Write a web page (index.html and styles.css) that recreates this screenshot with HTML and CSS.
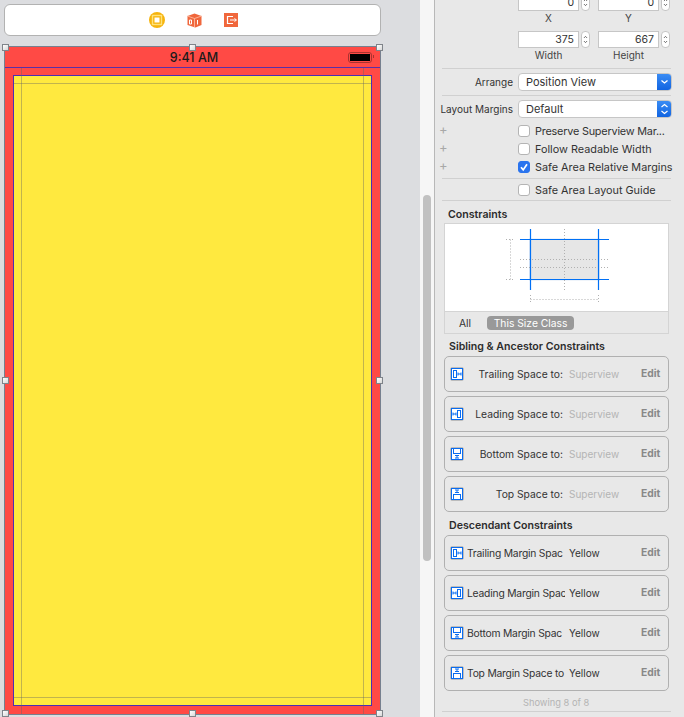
FILE: index.html
```html
<!DOCTYPE html>
<html lang="en">
<head>
    <meta charset="UTF-8">
    <title>Interface Builder</title>
    <link rel="stylesheet" href="styles.css">
</head>
<body>
    <svg class="defs" width="0" height="0">
        <symbol id="ic-trailing" viewBox="0 0 14 14">
            <rect x="1.5" y="1.5" width="11" height="11" fill="none" stroke="currentColor"/>
            <rect x="3.5" y="3.5" width="3" height="7" fill="none" stroke="currentColor"/>
            <path d="M8 5.5v3M11 5.5v3M8 7h3" fill="none" stroke="currentColor"/>
        </symbol>
        <symbol id="ic-leading" viewBox="0 0 14 14">
            <rect x="1.5" y="1.5" width="11" height="11" fill="none" stroke="currentColor"/>
            <rect x="7.5" y="3.5" width="3" height="7" fill="none" stroke="currentColor"/>
            <path d="M3 5.5v3M6 5.5v3M3 7h3" fill="none" stroke="currentColor"/>
        </symbol>
        <symbol id="ic-bottom" viewBox="0 0 14 14">
            <rect x="1.5" y="1.5" width="11" height="11" fill="none" stroke="currentColor"/>
            <rect x="3.5" y="1.5" width="7" height="5" fill="none" stroke="currentColor"/>
            <path d="M5 8.5h4M5 11h4M7 8.5v2.5" fill="none" stroke="currentColor"/>
        </symbol>
        <symbol id="ic-top" viewBox="0 0 14 14">
            <rect x="1.5" y="1.5" width="11" height="11" fill="none" stroke="currentColor"/>
            <rect x="3.5" y="7.5" width="7" height="5" fill="none" stroke="currentColor"/>
            <path d="M5 3h4M5 5.5h4M7 3v2.5" fill="none" stroke="currentColor"/>
        </symbol>
        <symbol id="ic-updown" viewBox="0 0 9 17">
            <path d="M2.5 6.5l2-2 2 2M2.5 10.5l2 2 2-2" fill="none" stroke="currentColor" stroke-width="1"/>
        </symbol>
    </svg>

    <div class="app">
        <main class="canvas">
            <div class="dock">
                <svg class="dock-icon" width="16" height="16" viewBox="0 0 16 16">
                    <circle cx="8" cy="8" r="8" fill="#f6b40e"/>
                    <rect x="3.5" y="3.5" width="9" height="9" fill="none" stroke="#ffe27a" stroke-width="1.4"/>
                    <rect x="5.5" y="5.5" width="5" height="5" fill="#fff"/>
                </svg>
                <svg class="dock-icon" width="15" height="15" viewBox="0 0 15 15">
                    <path d="M7.5 0.5L14.5 3v9l-6 2.5-1-.3L0.5 12V3z" fill="#f0673c"/>
                    <path d="M0.5 3l7 2.5L14.5 3M7.5 5.5v9" fill="none" stroke="#ffc4ac" stroke-width="0.8"/>
                    <path d="M2.5 7h2v4h-2zM10.5 7v4.5" fill="none" stroke="#fff" stroke-width="1"/>
                </svg>
                <svg class="dock-icon" width="14" height="14" viewBox="0 0 14 14">
                    <rect width="14" height="14" fill="#f0673c"/>
                    <path d="M9 3.5H3.5v7H9" fill="none" stroke="#fff" stroke-width="1.2"/>
                    <path d="M6 7h6M10.5 5.5L12.5 7l-2 1.5" fill="none" stroke="#fff" stroke-width="1"/>
                </svg>
            </div>

            <div class="phone">
                <div class="status-bar">
                    <span class="clock">9:41 AM</span>
                    <span class="battery"><span class="battery-fill"></span></span>
                </div>
                <div class="yellow"></div>

                <span class="guide guide-v guide-left"></span>
                <span class="guide guide-v guide-right"></span>
                <span class="guide guide-h guide-top"></span>
                <span class="guide guide-h guide-bottom"></span>

                <span class="handle h-tl"></span>
                <span class="handle h-tc"></span>
                <span class="handle h-tr"></span>
                <span class="handle h-ml"></span>
                <span class="handle h-mr"></span>
                <span class="handle h-bl"></span>
                <span class="handle h-bc"></span>
                <span class="handle h-br"></span>
            </div>
        </main>

        <div class="gutter"><div class="thumb"></div></div>

        <aside class="inspector">
            <div class="size-row cropped">
                <div class="size-cell">
                    <div class="stepper-field"><span class="field">0</span><svg class="stepper"><use href="#ic-updown"/></svg></div>
                    <div class="size-label">X</div>
                </div>
                <div class="size-cell">
                    <div class="stepper-field"><span class="field">0</span><svg class="stepper"><use href="#ic-updown"/></svg></div>
                    <div class="size-label">Y</div>
                </div>
            </div>
            <div class="size-row">
                <div class="size-cell">
                    <div class="stepper-field"><span class="field">375</span><svg class="stepper"><use href="#ic-updown"/></svg></div>
                    <div class="size-label">Width</div>
                </div>
                <div class="size-cell">
                    <div class="stepper-field"><span class="field">667</span><svg class="stepper"><use href="#ic-updown"/></svg></div>
                    <div class="size-label">Height</div>
                </div>
            </div>

            <hr class="sep sep-size">

            <div class="form-row">
                <label class="form-label">Arrange</label>
                <div class="select">
                    <span>Position View</span>
                    <span class="select-btn">
                        <svg width="15" height="18" viewBox="0 0 15 18"><path d="M4.5 7.5l3 2.5 3-2.5" fill="none" stroke="#fff" stroke-width="1.3"/></svg>
                    </span>
                </div>
            </div>
            <hr class="sep sep-arrange">
            <div class="form-row">
                <label class="form-label">Layout Margins</label>
                <div class="select">
                    <span>Default</span>
                    <span class="select-btn">
                        <svg width="15" height="18" viewBox="0 0 15 18"><path d="M4.5 7l3-2.5 3 2.5M4.5 11l3 2.5 3-2.5" fill="none" stroke="#fff" stroke-width="1.2"/></svg>
                    </span>
                </div>
            </div>

            <div class="checks">
                <div class="check-row"><span class="plus">+</span><span class="box"></span><span class="tight">Preserve Superview Mar...</span></div>
                <div class="check-row"><span class="plus">+</span><span class="box"></span><span>Follow Readable Width</span></div>
                <div class="check-row"><span class="plus">+</span><span class="box checked"><svg width="12" height="12" viewBox="0 0 12 12"><path d="M3 6.3l2.2 2.6 3.8-5.6" fill="none" stroke="#fff" stroke-width="1.7"/></svg></span><span>Safe Area Relative Margins</span></div>
            </div>
            <hr class="sep sep-checks">
            <div class="check-row guide-check"><span class="plus"></span><span class="box"></span><span>Safe Area Layout Guide</span></div>
            <hr class="sep sep-guide">

            <h3 class="section-title">Constraints</h3>
            <div class="constraint-box">
                <svg class="diagram" width="223" height="87" viewBox="0 0 223 87">
                    <rect x="84" y="14.5" width="71" height="42" fill="#dfe9f5"/>
                    <rect x="85.5" y="15.5" width="68" height="40" fill="#e6e6e6"/>
                    <g fill="none" stroke="#b0b0b0" stroke-dasharray="1 2">
                        <path d="M119.5 5v61M75 35.5h89M75 43.5h89"/>
                        <path d="M61 15.5h9M61 55.5h9M65.5 15.5v40"/>
                        <path d="M85.5 75.5h68M85.5 71v9M153.5 71v9"/>
                    </g>
                    <g fill="none" stroke="#0070f5" stroke-width="1.2">
                        <path d="M85.5 5v61M153.5 5v61M75 15.5h89M75 55.5h89"/>
                    </g>
                </svg>
                <div class="size-tabs">
                    <span class="tab">All</span>
                    <span class="tab tab-on">This Size Class</span>
                </div>
            </div>

            <h3 class="section-title sub-title">Sibling &amp; Ancestor Constraints</h3>
            <div class="cards">
                <div class="card"><span class="card-icon"><svg><use href="#ic-trailing"/></svg></span><span class="card-label">Trailing Space to:</span><span class="card-value muted">Superview</span><span class="card-edit">Edit</span></div>
                <div class="card"><span class="card-icon"><svg><use href="#ic-leading"/></svg></span><span class="card-label">Leading Space to:</span><span class="card-value muted">Superview</span><span class="card-edit">Edit</span></div>
                <div class="card"><span class="card-icon"><svg><use href="#ic-bottom"/></svg></span><span class="card-label">Bottom Space to:</span><span class="card-value muted">Superview</span><span class="card-edit">Edit</span></div>
                <div class="card"><span class="card-icon"><svg><use href="#ic-top"/></svg></span><span class="card-label">Top Space to:</span><span class="card-value muted">Superview</span><span class="card-edit">Edit</span></div>
            </div>

            <h3 class="section-title desc-title">Descendant Constraints</h3>
            <div class="cards">
                <div class="card"><span class="card-icon"><svg><use href="#ic-trailing"/></svg></span><span class="card-label long">Trailing Margin Spac</span><span class="card-value">Yellow</span><span class="card-edit">Edit</span></div>
                <div class="card"><span class="card-icon"><svg><use href="#ic-leading"/></svg></span><span class="card-label long">Leading Margin Spac</span><span class="card-value">Yellow</span><span class="card-edit">Edit</span></div>
                <div class="card"><span class="card-icon"><svg><use href="#ic-bottom"/></svg></span><span class="card-label long">Bottom Margin Spac</span><span class="card-value">Yellow</span><span class="card-edit">Edit</span></div>
                <div class="card"><span class="card-icon"><svg><use href="#ic-top"/></svg></span><span class="card-label long">Top Margin Space to</span><span class="card-value">Yellow</span><span class="card-edit">Edit</span></div>
            </div>
            <div class="showing">Showing 8 of 8</div>
            <hr class="sep sep-last">
        </aside>
    </div>
</body>
</html>
```

FILE: styles.css
```css
* {
    box-sizing: border-box;
}

html, body {
    margin: 0;
    height: 717px;
    overflow: hidden;
}

body {
    font-family: Inter, "Liberation Sans", sans-serif;
    font-size: 10.3px;
    color: #333;
}

.defs {
    position: absolute;
}

.app {
    display: flex;
    width: 684px;
    height: 717px;
}

/* canvas */

.canvas {
    width: 420px;
    flex: none;
    padding: 4px 39px 0 4px;
    background-color: #dcdde0;
}

.dock {
    display: flex;
    align-items: center;
    justify-content: center;
    gap: 22px;
    width: 377px;
    height: 32px;
    padding-left: 2px;
    background-color: #fff;
    border: 1px solid #b2b2b2;
    border-radius: 6px;
}

.dock-icon {
    display: block;
}

.phone {
    position: relative;
    width: 375px;
    height: 667px;
    margin: 11px 0 0 1px;
    background-color: #ff4a45;
    box-shadow: 0 0 0 1px #77808f;
}

.status-bar {
    display: flex;
    align-items: center;
    justify-content: center;
    height: 21px;
    padding-left: 3px;
    border-bottom: 1px solid #5a2fa8;
}

.clock {
    font-size: 12.5px;
    font-weight: 500;
    color: #1a1a1a;
}

.battery {
    position: absolute;
    right: 8px;
    top: 5px;
    width: 24px;
    height: 11px;
    padding: 1px;
    border: 1px solid #a8332f;
    border-radius: 3px;
}

.battery::after {
    content: "";
    position: absolute;
    right: -3px;
    top: 2px;
    width: 1px;
    height: 3px;
    background-color: #a8332f;
}

.battery-fill {
    display: block;
    height: 100%;
    background-color: #000;
}

.yellow {
    height: 631px;
    margin: 7px 8px 0;
    background-color: #ffe93f;
    border: 1px solid #4b2fb4;
}

.guide {
    position: absolute;
    background-color: rgba(100, 100, 100, 0.4);
}

.guide-v {
    top: 21px;
    bottom: 0;
    width: 1px;
}

.guide-left {
    left: 16px;
}

.guide-right {
    left: 358px;
}

.guide-h {
    left: 9px;
    width: 357px;
    height: 1px;
}

.guide-top {
    top: 36px;
}

.guide-bottom {
    top: 650px;
}

.handle {
    position: absolute;
    width: 7px;
    height: 7px;
    background: linear-gradient(135deg, #fff, #d8d8d8);
    border: 1px solid #80848a;
}

.h-tl { left: -3px; top: -3px; }
.h-tc { left: 184px; top: -3px; }
.h-tr { right: -3px; top: -3px; }
.h-ml { left: -3px; top: 330px; }
.h-mr { right: -3px; top: 330px; }
.h-bl { left: -3px; bottom: -3px; }
.h-bc { left: 184px; bottom: -3px; }
.h-br { right: -3px; bottom: -3px; }

/* scroller between canvas and inspector */

.gutter {
    width: 15px;
    flex: none;
    padding: 195px 3px 0;
    background-color: #f6f6f6;
    border-right: 1px solid #b8b8b8;
}

.thumb {
    width: 8px;
    height: 366px;
    background-color: #c1c1c1;
    border-radius: 4px;
}

/* inspector */

.inspector {
    flex: 1;
    min-width: 0;
    height: 717px;
    overflow: hidden;
    background-color: #e8e8e8;
}

.size-row {
    display: flex;
    gap: 8px;
    margin-left: 83px;
}

.size-row.cropped {
    margin-top: -6px;
    margin-bottom: 6px;
}

.size-cell {
    width: 72px;
}

.stepper-field {
    display: flex;
    align-items: center;
    gap: 2px;
}

.field {
    width: 61px;
    height: 17px;
    padding-right: 4px;
    font-size: 10.5px;
    line-height: 16px;
    text-align: right;
    background-color: #fff;
    border: 1px solid #c6c6c6;
}

.stepper {
    width: 9px;
    height: 17px;
    color: #444;
    background-color: #fff;
    border: 1px solid #c6c6c6;
    border-radius: 4px;
}

.size-label {
    width: 61px;
    margin-top: 1px;
    height: 13px;
    font-size: 10px;
    line-height: 13px;
    text-align: center;
    color: #444;
}

.sep {
    height: 1px;
    margin: 0 13px 0 7px;
    background-color: #d0d0d0;
    border: 0;
}

.sep-size {
    margin-top: 6px;
}

.sep-arrange {
    margin-top: 4px;
    margin-bottom: 4px;
}

.form-row {
    display: flex;
    align-items: center;
    gap: 5px;
    margin-top: 4px;
}

.form-label {
    width: 78px;
    font-size: 10px;
    text-align: right;
    white-space: nowrap;
}

.select {
    display: flex;
    align-items: center;
    justify-content: space-between;
    width: 154px;
    height: 18px;
    padding-left: 7px;
    font-size: 11px;
    background-color: #fff;
    border: 1px solid #c6c6c6;
    border-radius: 4px;
    overflow: hidden;
}

.select-btn {
    display: block;
    width: 15px;
    height: 18px;
    margin-right: -1px;
    background: linear-gradient(#3c8ef5, #0f62e0);
}

.select-btn svg {
    display: block;
}

.checks {
    margin-top: 4px;
}

.check-row {
    display: flex;
    align-items: center;
    height: 18px;
    font-size: 10.85px;
    white-space: nowrap;
}

.tight {
    letter-spacing: -0.2px;
}

.plus {
    width: 83px;
    height: 18px;
    padding-left: 4px;
    font-size: 13px;
    line-height: 14px;
    color: #a8a8a8;
}

.box {
    width: 12px;
    height: 12px;
    margin-right: 5px;
    flex: none;
    background-color: #fff;
    border: 1px solid #b4b4b4;
    border-radius: 3px;
}

.box.checked {
    background-color: #2a74ee;
    border-color: #2a74ee;
}

.box.checked svg {
    display: block;
    margin: -1px;
}

.sep-checks {
    margin-top: 2px;
}

.guide-check {
    margin-top: 2px;
}

.sep-guide {
    margin-top: 1px;
}

.section-title {
    margin: 7px 0 0 13px;
    height: 13px;
    font-size: 10.6px;
    font-weight: 600;
    line-height: 13px;
    color: #2c2c2c;
}

.constraint-box {
    width: 225px;
    margin: 2px 0 0 9px;
    background-color: #e8e8e8;
    border: 1px solid #d4d4d4;
}

.diagram {
    display: block;
    background-color: #fff;
}

.size-tabs {
    display: flex;
    align-items: center;
    gap: 16px;
    height: 22px;
    padding-left: 14px;
    border-top: 1px solid #d4d4d4;
}

.tab {
    font-size: 10.3px;
}

.tab-on {
    width: 87px;
    height: 14px;
    line-height: 14px;
    text-align: center;
    color: #fff;
    background-color: #999;
    border-radius: 4px;
}

.sub-title {
    margin: 6px 0 0 14px;
}

.cards {
    display: flex;
    flex-direction: column;
    gap: 4px;
    margin: 3px 15px 0 9px;
}

.card {
    display: flex;
    align-items: center;
    height: 36px;
    padding-left: 5px;
    white-space: nowrap;
    border: 1px solid #b0b0b0;
    border-radius: 5px;
}

.card-icon {
    width: 14px;
    height: 14px;
    flex: none;
    color: #0a6cf0;
    background-color: #fff;
    border: 1px solid #bcbcbc;
    border-radius: 2px;
}

.card-icon svg {
    display: block;
    width: 14px;
    height: 14px;
    margin: -1px;
}

.card-label {
    width: 98px;
    margin: 0 4px 0 3px;
    padding-right: 2px;
    overflow: hidden;
    text-align: right;
}

.card-label.long {
    padding-right: 0;
    letter-spacing: -0.2px;
    text-align: left;
}

.card-value {
    width: 72px;
    font-size: 10px;
}

.muted {
    color: #b4b4b4;
}

.card-edit {
    margin-top: -2px;
    font-weight: 700;
    color: #888;
}

.desc-title {
    margin: 7px 0 0 14px;
}

.showing {
    margin-top: 6px;
    height: 12px;
    padding-left: 88px;
    font-size: 9.3px;
    line-height: 12px;
    color: #b4b4b4;
}

.sep-last {
    margin-top: 2px;
}
```
